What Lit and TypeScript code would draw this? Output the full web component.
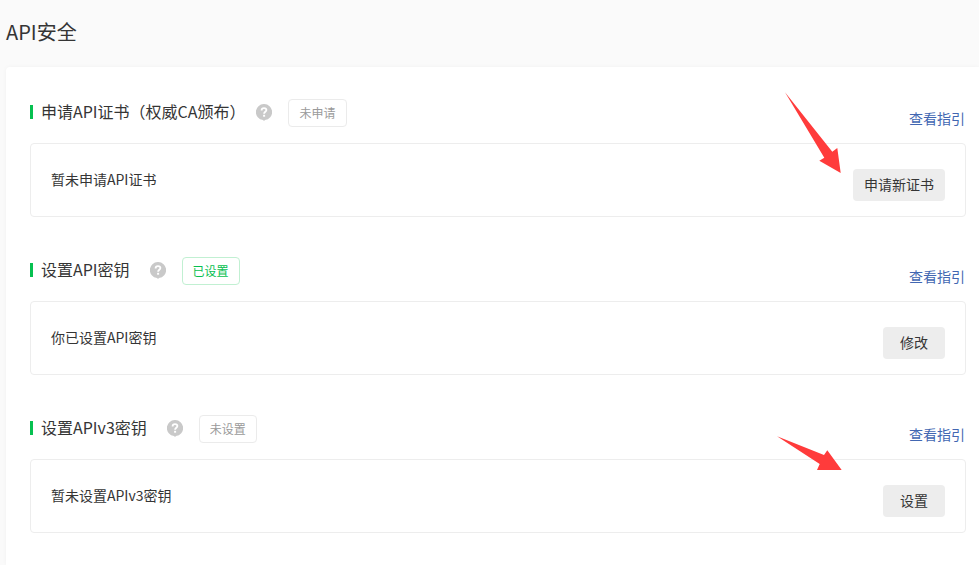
import { LitElement, html, css, svg, nothing } from "lit";
import { customElement, property } from "lit/decorators.js";
import { classMap } from "lit/directives/class-map.js";

interface Setting {
  title: string;
  status: string;
  done?: boolean;
  tight?: boolean;
  text: string;
  action: string;
  arrow?: "steep" | "flat";
}

const settings: Setting[] = [
  {
    title: "申请API证书（权威CA颁布）",
    status: "未申请",
    tight: true,
    text: "暂未申请API证书",
    action: "申请新证书",
    arrow: "steep",
  },
  { title: "设置API密钥", status: "已设置", done: true, text: "你已设置API密钥", action: "修改" },
  { title: "设置APIv3密钥", status: "未设置", text: "暂未设置APIv3密钥", action: "设置", arrow: "flat" },
];

const arrowShapes = {
  steep: svg`<path d="M2 2.3 41.3 67.7 36.3 70.7 57.7 83 54.3 58 49.3 61.7Z"/>`,
  flat: svg`<path d="M2 4.3 49 23 52.3 18.3 66.7 38 42 38 44.7 32Z"/>`,
};

@customElement("setting-section")
export class SettingSection extends LitElement {
  @property({ attribute: false }) item!: Setting;

  static styles = css`
    :host {
      display: block;
      position: relative;
    }
    .head {
      display: flex;
      justify-content: space-between;
      align-items: flex-start;
      height: 44px;
      padding-right: 1px;
    }
    .left {
      display: flex;
      align-items: flex-start;
      gap: 16px;
    }
    .name {
      display: flex;
      align-items: flex-start;
      gap: 20px;
    }
    .name.tight {
      gap: 11px;
    }
    h2 {
      display: flex;
      align-items: flex-start;
      gap: 8px;
      margin: 0;
      font-size: 16px;
      font-weight: 400;
      line-height: 24px;
      white-space: nowrap;
    }
    h2::before {
      content: "";
      width: 3px;
      height: 14px;
      margin-top: 6px;
      background: #06c050;
    }
    button {
      font: inherit;
      color: inherit;
      border: 0;
      cursor: pointer;
    }
    .help {
      width: 16px;
      margin-top: 5px;
      padding: 0;
      background: none;
    }
    .help svg {
      display: block;
    }
    .status {
      box-sizing: border-box;
      height: 28px;
      padding: 0 10px;
      border: 1px solid #ebebeb;
      border-radius: 4px;
      color: #9a9a9a;
      font-size: 12px;
      line-height: 26px;
      white-space: nowrap;
    }
    .status.done {
      border-color: #c1f0d2;
      color: #06c050;
    }
    a {
      margin-top: 9px;
      color: #4267b2;
      line-height: 20px;
      text-decoration: none;
      white-space: nowrap;
    }
    .box {
      display: flex;
      justify-content: space-between;
      align-items: flex-start;
      padding: 25px 20px 15px;
      border: 1px solid #ededed;
      border-radius: 4px;
    }
    p {
      margin: 0;
      line-height: 20px;
    }
    .action {
      min-width: 62px;
      height: 32px;
      padding: 0 11px 2px;
      border-radius: 4px;
      background: #ededed;
      white-space: nowrap;
    }
    .arrow {
      position: absolute;
      fill: #ff3b3b;
      pointer-events: none;
    }
    .steep {
      top: -9px;
      right: 123px;
    }
    .flat {
      top: 17px;
      right: 121px;
    }
  `;

  render() {
    const { title, status, done, tight, text, action, arrow } = this.item;
    return html`
      <div class="head">
        <div class="left">
          <div class=${classMap({ name: true, tight: !!tight })}>
            <h2>${title}</h2>
            <button class="help" type="button" aria-label="帮助">
              <svg width="16" height="17" viewBox="0 0 16 17" aria-hidden="true">
                <path d="M8 0a8 8 0 0 1 1 15.95L8 17l-1-1.05A8 8 0 0 1 8 0Z" fill="#c9c9c9" />
                <path
                  d="M5.6 6.4C5.6 4.8 6.6 4.1 8 4.1s2.4.8 2.4 2c0 1.7-2.3 1.7-2.3 3.6"
                  fill="none"
                  stroke="#fff"
                  stroke-width="1.8"
                />
                <path d="M7.1 10.8h2v1.9h-2z" fill="#fff" />
              </svg>
            </button>
          </div>
          <span class=${classMap({ status: true, done: !!done })}>${status}</span>
        </div>
        <a href="#guide">查看指引</a>
      </div>
      <div class="box">
        <p>${text}</p>
        <button class="action" type="button">${action}</button>
      </div>
      ${arrow
        ? html`<svg
            class=${classMap({ arrow: true, [arrow]: true })}
            width=${arrow === "steep" ? 60 : 70}
            height=${arrow === "steep" ? 84 : 40}
            aria-hidden="true"
          >
            ${arrowShapes[arrow]}
          </svg>`
        : nothing}
    `;
  }
}

@customElement("app-root")
export class AppRoot extends LitElement {
  static styles = css`
    :host {
      display: flex;
      flex-direction: column;
      box-sizing: border-box;
      min-height: 100vh;
      padding: 16px 0 0 6px;
      background: #fafafa;
      color: #353535;
      font: 14px/20px "Noto Sans CJK SC", sans-serif;
    }
    h1 {
      margin: 0 0 19px;
      font-size: 20px;
      font-weight: 400;
      line-height: 32px;
    }
    main {
      display: flex;
      flex: 1;
      flex-direction: column;
      gap: 40px;
      padding: 32px 13px 32px 24px;
      border-radius: 4px 0 0 0;
      background: #fff;
      box-shadow: 0 0 4px rgba(0, 0, 0, 0.04);
    }
  `;

  render() {
    return html`
      <h1>API安全</h1>
      <main>${settings.map((s) => html`<setting-section .item=${s}></setting-section>`)}</main>
    `;
  }
}
